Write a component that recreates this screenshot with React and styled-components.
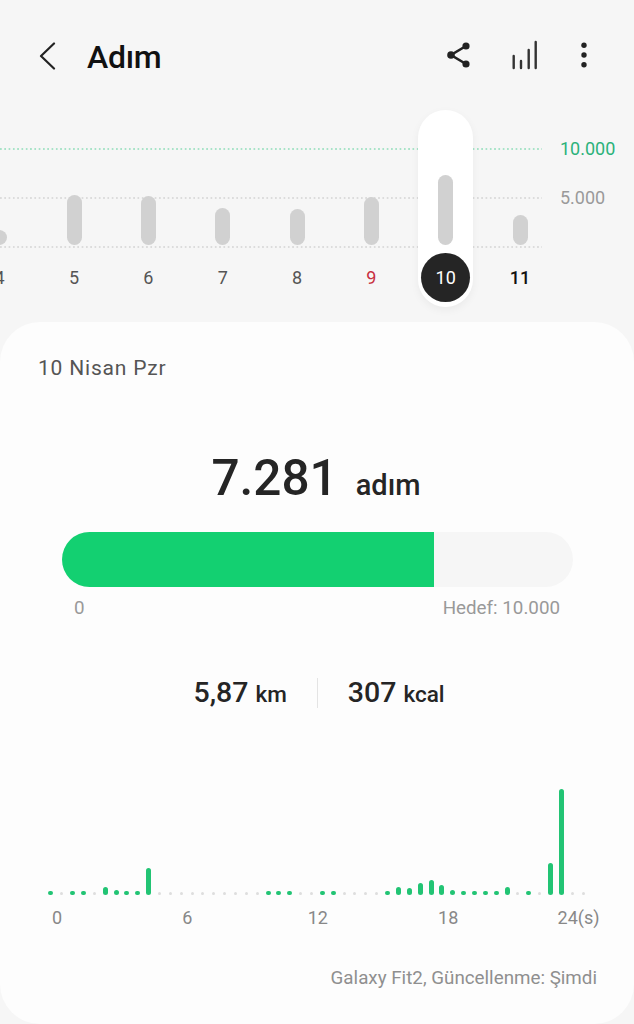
import React from 'react'
import styled, { createGlobalStyle } from 'styled-components'

const days = [
  { label: '4', height: 15 },
  { label: '5', height: 50 },
  { label: '6', height: 49 },
  { label: '7', height: 37 },
  { label: '8', height: 36 },
  { label: '9', height: 48, tone: 'sunday' },
  { label: '10', height: 70, selected: true },
  { label: '11', height: 30, tone: 'today' },
]

// half hour slots, anything not listed here is an empty dot
const slots = {
  0: 4, 2: 4, 3: 4, 5: 8, 6: 5, 7: 4, 8: 4, 9: 27,
  20: 4, 21: 4, 22: 4, 25: 4, 26: 4,
  31: 4, 32: 8, 33: 7, 34: 12, 35: 15, 36: 10, 37: 5, 38: 4, 39: 4, 40: 4, 41: 4, 42: 8,
  44: 4, 46: 32, 47: 106,
}

const hours = ['0', '6', '12', '18', '24(s)']

export default function App() {
  return (
    <Page>
      <GlobalStyle />
      <Header>
        <BackButton>
          <svg width="17" height="28" viewBox="0 0 17 28" fill="none" stroke="#222" strokeWidth="2.2" strokeLinecap="round" strokeLinejoin="round">
            <path d="M15 1.5 L2 14 L15 26.5" />
          </svg>
        </BackButton>
        <Title>Adım</Title>
        <Actions>
          <svg width="23" height="26" viewBox="0 0 23 26" fill="#222" stroke="#222">
            <path d="M19 4 L4 13 L19 22" fill="none" strokeWidth="2.6" />
            <circle cx="19" cy="4" r="3.6" stroke="none" />
            <circle cx="4" cy="13" r="3.8" stroke="none" />
            <circle cx="19" cy="22" r="3.6" stroke="none" />
          </svg>
          <svg width="26" height="30" viewBox="0 0 26 30" fill="none" stroke="#333" strokeWidth="2.4" strokeLinecap="round">
            <path d="M1.7 16 V28 M9 21 V28 M16.7 10 V28 M23.7 2 V28" />
          </svg>
          <svg width="8" height="26" viewBox="0 0 8 26" fill="#222">
            <circle cx="4" cy="3.3" r="2.7" />
            <circle cx="4" cy="13" r="2.7" />
            <circle cx="4" cy="22.7" r="2.7" />
          </svg>
        </Actions>
      </Header>

      <WeekChart>
        <Guides>
          <GuideRow>
            <GuideLine color="#a8e3c8" />
            <GuideLabel color="#2bb27a">10.000</GuideLabel>
          </GuideRow>
          <GuideRow>
            <GuideLine color="#dcdcdc" />
            <GuideLabel color="#9a9a9a">5.000</GuideLabel>
          </GuideRow>
          <GuideRow>
            <GuideLine color="#dcdcdc" />
          </GuideRow>
        </Guides>
        <DayRow>
          {days.map(day => (
            <DayColumn key={day.label} selected={day.selected}>
              <DayWell>
                <DayBar style={{ height: day.height }} />
              </DayWell>
              <DayLabel selected={day.selected} tone={day.tone}>
                {day.label}
              </DayLabel>
            </DayColumn>
          ))}
        </DayRow>
      </WeekChart>

      <Card>
        <DateLine>10 Nisan Pzr</DateLine>

        <Total>
          <TotalValue>7.281</TotalValue>
          <TotalUnit>adım</TotalUnit>
        </Total>

        <Progress>
          <ProgressFill style={{ width: '72.81%' }} />
        </Progress>
        <ProgressLabels>
          <span>0</span>
          <span>Hedef: 10.000</span>
        </ProgressLabels>

        <Stats>
          <Stat>
            <StatValue>5,87</StatValue>
            <StatUnit>km</StatUnit>
          </Stat>
          <StatDivider />
          <Stat>
            <StatValue>307</StatValue>
            <StatUnit>kcal</StatUnit>
          </Stat>
        </Stats>

        <DayPlot>
          {Array.from({ length: 50 }, (_, i) => (
            <Slot key={`slot-${i}`}>
              {slots[i] ? <SlotBar style={{ height: slots[i] }} /> : <SlotDot />}
            </Slot>
          ))}
        </DayPlot>
        <HourAxis>
          {hours.map(hour => (
            <HourLabel key={hour}>{hour}</HourLabel>
          ))}
        </HourAxis>

        <SourceLine>Galaxy Fit2, Güncellenme: Şimdi</SourceLine>
      </Card>
    </Page>
  )
}

const GlobalStyle = createGlobalStyle`
  html, body {
    margin: 0;
    padding: 0;
    background: #f6f6f6;
  }
  * {
    box-sizing: border-box;
  }
`

const Page = styled.div`
  width: 634px;
  height: 1024px;
  overflow: hidden;
  background: #f6f6f6;
  font-family: Roboto, 'Liberation Sans', sans-serif;
  color: #252525;
`

const Header = styled.header`
  height: 112px;
  display: flex;
  align-items: center;
  padding: 0 46px 0 39px;
`

const BackButton = styled.div`
  display: flex;
  width: 48px;
`

const Title = styled.h1`
  margin: 2px 0 0;
  font-size: 32px;
  font-weight: 500;
  letter-spacing: -0.3px;
  color: #111;
`

const Actions = styled.div`
  margin-left: auto;
  padding-bottom: 2px;
  display: flex;
  align-items: center;
  gap: 42px;
`

const WeekChart = styled.section`
  position: relative;
  height: 210px;
`

const Guides = styled.div`
  position: absolute;
  top: 36px;
  left: 0;
  right: 0;
  display: flex;
  flex-direction: column;
  gap: 48px;
`

const GuideRow = styled.div`
  height: 1px;
  display: flex;
  align-items: center;
`

const GuideLine = styled.div`
  width: 542px;
  height: 2px;
  background-image: linear-gradient(90deg, ${props => props.color} 50%, transparent 50%);
  background-size: 4.3px 100%;
`

const GuideLabel = styled.span`
  margin-left: 18px;
  font-size: 18px;
  color: ${props => props.color};
`

const DayRow = styled.div`
  position: relative;
  display: flex;
  margin-left: -37.5px;
`

const DayColumn = styled.div`
  position: relative;
  flex: 0 0 74.35px;
  display: flex;
  flex-direction: column;
  align-items: center;

  ${props =>
    props.selected &&
    `
    &::before {
      content: '';
      position: absolute;
      top: -2px;
      left: 9.5px;
      width: 55px;
      height: 197px;
      border-radius: 28px;
      background: #fff;
      box-shadow: 0 3px 8px rgba(0, 0, 0, 0.05);
    }
  `}
`

const DayWell = styled.div`
  position: relative;
  height: 133px;
  display: flex;
  align-items: flex-end;
`

const DayBar = styled.div`
  width: 15px;
  border-radius: 8px;
  background: #d1d1d1;
`

const dayColors = { sunday: '#c8303f', today: '#111' }

const DayLabel = styled.div`
  position: relative;
  width: 49px;
  height: 49px;
  margin-top: 8px;
  display: flex;
  align-items: center;
  justify-content: center;
  border-radius: 50%;
  font-size: 18px;
  font-weight: ${props => (props.tone === 'today' ? 500 : 400)};
  color: ${props => (props.selected ? '#fff' : dayColors[props.tone] || '#555')};
  background: ${props => (props.selected ? '#252525' : 'transparent')};
`

const Card = styled.main`
  height: 702px;
  padding-top: 34px;
  border-radius: 40px;
  background: #fdfdfd;
`

const DateLine = styled.div`
  padding-left: 38px;
  font-size: 21px;
  line-height: 24px;
  letter-spacing: 0.8px;
  color: #555;
`

const Total = styled.div`
  margin-top: 69px;
  padding-right: 2px;
  display: flex;
  justify-content: center;
  align-items: baseline;
  gap: 18px;
`

const TotalValue = styled.span`
  font-size: 49.5px;
  line-height: 58px;
  font-weight: 500;
`

const TotalUnit = styled.span`
  font-size: 29px;
  font-weight: 500;
`

const Progress = styled.div`
  margin: 25px 0 0 62px;
  width: 511px;
  height: 55px;
  border-radius: 28px;
  overflow: hidden;
  background: #f6f6f6;
`

const ProgressFill = styled.div`
  height: 100%;
  background: #13d071;
`

const ProgressLabels = styled.div`
  margin-top: 10px;
  padding: 0 74px;
  display: flex;
  justify-content: space-between;
  font-size: 18.8px;
  line-height: 22px;
  color: #999;
`

const Stats = styled.div`
  margin-top: 57px;
  padding-left: 4px;
  display: flex;
  justify-content: center;
  align-items: center;
  gap: 30px;
`

const Stat = styled.div`
  display: flex;
  align-items: baseline;
  gap: 7px;
`

const StatValue = styled.span`
  font-size: 28.5px;
  font-weight: 500;
`

const StatUnit = styled.span`
  font-size: 22.5px;
  font-weight: 500;
`

const StatDivider = styled.div`
  width: 1px;
  height: 30px;
  background: #e4e4e4;
`

const DayPlot = styled.div`
  margin-top: 78px;
  padding-left: 45.5px;
  height: 108px;
  display: flex;
  align-items: flex-end;
`

const Slot = styled.div`
  flex: 0 0 10.87px;
  display: flex;
  justify-content: center;
`

const SlotBar = styled.div`
  width: 5px;
  border-radius: 3px;
  background: #22c474;
`

const SlotDot = styled.div`
  width: 3px;
  height: 3px;
  margin-bottom: 0.5px;
  border-radius: 50%;
  background: #dedede;
`

const HourAxis = styled.div`
  margin-top: 12px;
  padding-left: 47px;
  display: flex;
  gap: 110.4px;
`

const HourLabel = styled.div`
  width: 20px;
  display: flex;
  justify-content: center;
  white-space: nowrap;
  font-size: 18px;
  line-height: 22px;
  color: #888;
`

const SourceLine = styled.div`
  margin-top: 38px;
  padding-right: 37px;
  text-align: right;
  font-size: 18.8px;
  line-height: 22px;
  color: #8f8f8f;
`
